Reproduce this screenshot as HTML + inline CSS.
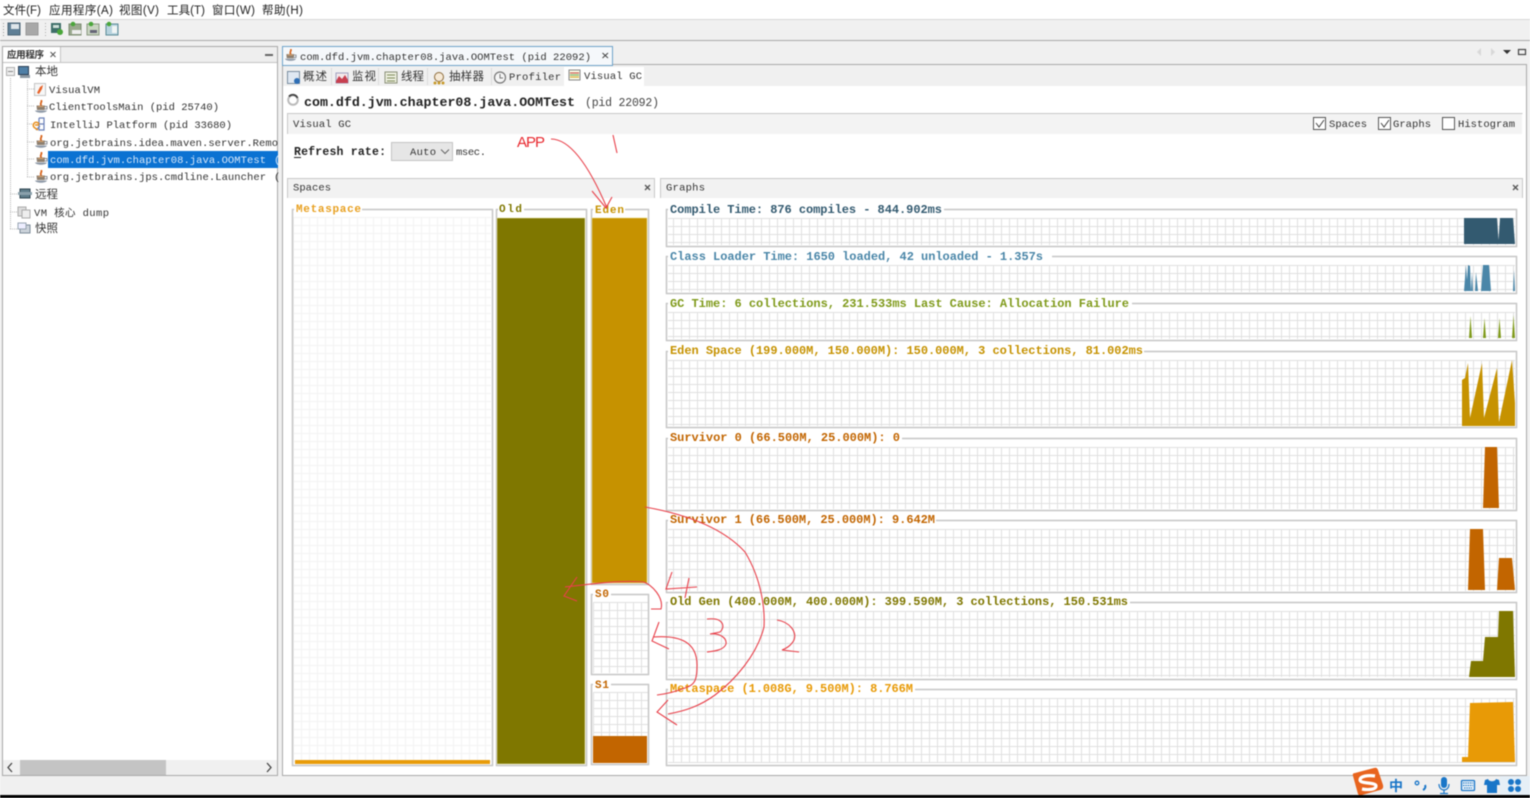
<!DOCTYPE html>
<html><head><meta charset="utf-8"><title>VisualVM</title>
<style>
html,body{margin:0;padding:0;background:#fff;width:1530px;height:798px;overflow:hidden}
svg{display:block}
#root{filter:blur(.4px)}
text{font-family:"Liberation Mono","Noto Sans CJK SC",monospace;white-space:pre}
.m{font-family:"Liberation Sans","Noto Sans CJK SC",sans-serif;font-size:11.5px;fill:#222}
.t{font-size:10.5px;fill:#333}
.c{font-family:"Noto Sans CJK SC","Liberation Sans",sans-serif;font-size:11.5px;fill:#333}
.b{font-size:12px;font-weight:bold}
.box{fill:none;stroke:#c6c6c6;stroke-width:1.5}
.r{fill:none;stroke:#e8404a;stroke-width:1.1}
</style></head><body>
<svg id="root" width="1530" height="798" viewBox="0 0 1530 798" xmlns="http://www.w3.org/2000/svg">
<defs>
<pattern id="g" width="8" height="8" patternUnits="userSpaceOnUse"><path d="M.5 0V8M0 .5H8" stroke="#e0e0e0" fill="none"/></pattern>
<pattern id="g2" width="8" height="8" patternUnits="userSpaceOnUse"><path d="M.5 0V8M0 .5H8" stroke="#f3f3f3" fill="none"/></pattern>
<symbol id="java" viewBox="0 0 14 14"><path d="M7 0C9 2 5 3 7.500 6" stroke="#d8641c" fill="none" stroke-width="1.800"/><path d="M2.500 5.500H11L10.500 10H3Z" fill="#8d7f70"/><path d="M4 6.500L9.500 6.500" stroke="#d9a066"/><path d="M1 10.500H13C12 13.500 2 13.500 1 10.500Z" fill="#8f9aa8"/><path d="M11 6.500H13V9H10.500" fill="none" stroke="#8a8f98"/></symbol>
</defs>

<!-- menu -->
<rect width="1530" height="20" fill="#fff"/>
<rect y="19" width="1530" height="1" fill="#d8d8d8"/>
<text class="m" x="3" y="14" textLength="38">文件(F)</text>
<text class="m" x="49" y="14" textLength="64">应用程序(A)</text>
<text class="m" x="119" y="14" textLength="40">视图(V)</text>
<text class="m" x="167" y="14" textLength="38">工具(T)</text>
<text class="m" x="212" y="14" textLength="43">窗口(W)</text>
<text class="m" x="262" y="14" textLength="41">帮助(H)</text>

<!-- toolbar -->
<rect y="20" width="1530" height="778" fill="#f0f0f0"/>
<rect y="40" width="1530" height="1" fill="#a9a9a9"/>
<path d="M3.500 23V36" stroke="#999" stroke-dasharray="1 2"/>
<rect x="8" y="23" width="12" height="12" fill="#5f7f96" stroke="#4c6475"/><rect x="11" y="24" width="8" height="5" fill="#dfe6ea"/>
<rect x="26" y="23" width="12" height="12" fill="#a8a8a8" stroke="#989898"/>
<path d="M45.500 23V36" stroke="#aaa" stroke-dasharray="1 2"/>
<rect x="51" y="23" width="10" height="10" fill="#3f6f6a"/><rect x="53" y="25" width="6" height="3" fill="#cfe0d8"/><circle cx="60" cy="32" r="3" fill="#4aa63a"/>
<rect x="69" y="24" width="12" height="11" fill="#9aa98e" stroke="#7c8c72"/><rect x="72" y="30" width="9" height="4" fill="#eee"/><circle cx="73" cy="24" r="2.300" fill="#4aa63a"/>
<rect x="87" y="24" width="12" height="11" fill="#c8d4c0" stroke="#8b9a82"/><rect x="90" y="30" width="7" height="3" fill="#667"/><circle cx="91" cy="24" r="2.300" fill="#4aa63a"/>
<rect x="106" y="24" width="12" height="11" fill="#b7d3de" stroke="#5b8a96"/><rect x="112" y="26" width="5" height="7" fill="#f0f5f5"/><circle cx="109" cy="24" r="2.300" fill="#4aa63a"/>

<!-- left panel -->
<rect x="2.500" y="46.500" width="275" height="729" fill="#fff" stroke="#a9a9a9"/>
<rect x="3" y="47" width="274" height="15" fill="#eeeeee"/>
<rect x="3" y="47" width="57" height="15" fill="#fff"/>
<path d="M60.500 47V62M3 62.500H277" stroke="#c4c4c4" fill="none"/>
<text x="7" y="58" style="font-family:'Noto Sans CJK SC',sans-serif;font-size:9.500px;font-weight:bold;fill:#333" textLength="37">应用程序</text>
<path d="M50.500 52L55.500 57M55.500 52L50.500 57" stroke="#555" fill="none"/>
<rect x="265" y="54" width="8" height="2" fill="#666"/>

<path d="M10.500 78V229M10 194H17M10 212H17M10 229H17M27.500 80V177M27 89H34M27 106H34M27 124H34M27 142H34M27 159H34M27 177H34" stroke="#b5b5b5" stroke-dasharray="1 1" fill="none"/>
<rect x="6.500" y="67.500" width="8" height="8" fill="#eee" stroke="#b0b0b0"/><path d="M8 71.500H13" stroke="#888"/>
<rect x="18.500" y="66.500" width="10" height="8" fill="#4f7fa6" stroke="#2b3f55"/><rect x="20" y="75" width="10" height="3" fill="#8d98a2"/>
<text class="c" x="35" y="75" textLength="23">本地</text>
<rect x="34.500" y="83.500" width="11" height="12" fill="#f7f7f7" stroke="#c4c4c4"/><path d="M37 93L40 87L43 85L42 89L39 94Z" fill="#e8632a"/>
<text class="t" x="49" y="93" textLength="51">VisualVM</text>
<use href="#java" x="34" y="100" width="14" height="14"/>
<text class="t" x="49" y="110" textLength="170">ClientToolsMain (pid 25740)</text>
<path d="M36 130L40 126M39 118H44V130H39V118M39 124H44" fill="none" stroke="#6a80b8" stroke-width="1.200"/>
<path d="M35 125H39M39 124A3 3 0 1 0 35 128L38 130" fill="none" stroke="#e89020" stroke-width="1.500"/>
<text class="t" x="50" y="128" textLength="182">IntelliJ Platform (pid 33680)</text>
<use href="#java" x="34" y="135" width="14" height="14"/>
<text class="t" x="50" y="146" textLength="228">org.jetbrains.idea.maven.server.Remo</text>
<rect x="48" y="151" width="230" height="17" fill="#0b72d2"/>
<use href="#java" x="34" y="152" width="14" height="14"/>
<text class="t" x="50" y="163" textLength="216" style="fill:#d8e8fa">com.dfd.jvm.chapter08.java.OOMTest</text>
<text class="t" x="274" y="163" style="fill:#d8e8fa">(</text>
<use href="#java" x="34" y="170" width="14" height="14"/>
<text class="t" x="50" y="180" textLength="216">org.jetbrains.jps.cmdline.Launcher</text>
<text class="t" x="274" y="180">(</text>
<rect x="20" y="189" width="10" height="9" fill="#5f7d8a" stroke="#2e4450"/><rect x="18" y="192" width="14" height="3" fill="#8aa0ab"/>
<text class="c" x="35" y="198" textLength="23">远程</text>
<rect x="18" y="207" width="8" height="9" fill="#ddd" stroke="#aaa"/><rect x="22" y="210" width="8" height="8" fill="#eee" stroke="#aaa"/>
<text class="t" x="34" y="216" textLength="75">VM 核心 dump</text>
<rect x="20" y="225" width="10" height="8" fill="#ccd3da" stroke="#7c8b99"/><rect x="18" y="223" width="8" height="6" fill="#eef" stroke="#98a5b2"/>
<text class="c" x="35" y="232" textLength="23">快照</text>

<!-- left scrollbar -->
<rect x="3" y="760" width="274" height="15" fill="#f0f0f0"/>
<rect x="20" y="760" width="146" height="15" fill="#c4c4c4"/>
<path d="M12 763L8 767.500L12 772M267 763L271 767.500L267 772" fill="none" stroke="#444" stroke-width="1.300"/>

<!-- right panel -->
<rect x="282.500" y="64.500" width="1244" height="711" fill="#fff" stroke="#a9a9a9"/>
<rect x="283" y="65" width="1243" height="21" fill="#f0f0f0"/>
<rect x="282.500" y="46.500" width="330" height="19" fill="#f5f8fb" stroke="#6ea3c9"/>
<use href="#java" x="284" y="49" width="13" height="13"/>
<text class="t" x="300" y="60" textLength="291">com.dfd.jvm.chapter08.java.OOMTest (pid 22092)</text>
<path d="M602.500 53L608 58M608 53L602.500 58" stroke="#444" fill="none"/>
<path d="M1481 48L1477 52L1481 56Z" fill="#d8d8d8"/><path d="M1491 48L1495 52L1491 56Z" fill="#d8d8d8"/>
<path d="M1503 50H1511L1507 54Z" fill="#333"/>
<rect x="1518.500" y="49.500" width="7" height="5" fill="none" stroke="#444" stroke-width="1.200"/>

<!-- subtabs -->
<path d="M331.500 68V85M378.500 68V85M427.500 68V85M491.500 68V85" stroke="#dcdcdc"/>
<rect x="287.500" y="71.500" width="12" height="12" fill="#dfe8f2" stroke="#7a8ea0"/><circle cx="297" cy="81" r="3" fill="#2f6fb5"/>
<text class="c" x="303" y="80" textLength="24">概述</text>
<rect x="336" y="73" width="12" height="10" fill="#f3e8ea" stroke="#a0a0c0"/><path d="M336 81L339 76L342 79L345 75L348 80V83H336Z" fill="#c84050"/>
<text class="c" x="352" y="80" textLength="24">监视</text>
<rect x="385" y="72" width="12" height="11" fill="#eef0e0" stroke="#8a8f78"/><path d="M387 75H395M387 78H395M387 81H395" stroke="#7c8a5a"/>
<text class="c" x="401" y="80" textLength="23">线程</text>
<circle cx="439" cy="77" r="4.500" fill="#f6e9d6" stroke="#8d6b3a"/><circle cx="435" cy="83" r="1.500" fill="#c89a2a"/><circle cx="439" cy="83" r="1.500" fill="#c89a2a"/><circle cx="443" cy="83" r="1.500" fill="#c89a2a"/>
<text class="c" x="449" y="80" textLength="35">抽样器</text>
<circle cx="500" cy="77.500" r="5.500" fill="#f5f5f5" stroke="#777" stroke-width="1.200"/><path d="M500 74V78H503" stroke="#777" fill="none"/>
<text class="t" x="509" y="80" textLength="52">Profiler</text>
<rect x="564" y="67" width="80" height="19" fill="#fff"/>
<rect x="569" y="70" width="11" height="10" fill="#f8f8e4" stroke="#888"/><path d="M570 73H579" stroke="#c8453a"/><path d="M570 75H579" stroke="#6aa84f"/><path d="M570 77H579" stroke="#d8a020"/>
<text class="t" x="584" y="79" textLength="58">Visual GC</text>

<!-- title -->
<circle cx="293" cy="100" r="4.800" fill="none" stroke="#bbb" stroke-width="2"/>
<path d="M289 96.500A5 5 0 0 1 297.500 98" fill="none" stroke="#444" stroke-width="1.800"/>
<text x="304" y="106" textLength="271" style="font-size:13.300px;font-weight:bold;fill:#222">com.dfd.jvm.chapter08.java.OOMTest</text>
<text x="585" y="106" textLength="74" style="font-size:11.500px;fill:#444">(pid 22092)</text>

<!-- visual gc bar -->
<rect x="287" y="113" width="1235" height="21" fill="#f3f3f3"/>
<path d="M287.500 134V113.500H1522.500" stroke="#c8c8c8" fill="none"/>
<text class="t" x="293" y="127" textLength="58">Visual GC</text>
<rect x="1313.500" y="117.500" width="12" height="12" fill="#fff" stroke="#555"/><path d="M1316 123L1319 127L1324 120" fill="none" stroke="#444"/>
<text class="t" x="1329" y="127" textLength="38">Spaces</text>
<rect x="1378.500" y="117.500" width="12" height="12" fill="#fff" stroke="#555"/><path d="M1381 123L1384 127L1389 120" fill="none" stroke="#444"/>
<text class="t" x="1393" y="127" textLength="38">Graphs</text>
<rect x="1442.500" y="117.500" width="12" height="12" fill="#fff" stroke="#555"/>
<text class="t" x="1458" y="127" textLength="57">Histogram</text>

<!-- refresh -->
<text x="294" y="155" textLength="92" style="font-size:11.500px;font-weight:bold;fill:#222">Refresh rate:</text>
<path d="M294 157.500H301" stroke="#222"/>
<rect x="391.500" y="142.500" width="61" height="18" fill="#e6e6e6" stroke="#c4c4c4"/>
<text class="t" x="410" y="155" textLength="26">Auto</text>
<path d="M441 149.500L445 153.500L449 149.500" fill="none" stroke="#666"/>
<text class="t" x="456" y="155" textLength="30">msec.</text>

<!-- section headers -->
<rect x="287" y="178" width="368" height="20" fill="#f2f2f2"/>
<path d="M287.500 198V178.500H654.500V198" stroke="#c8c8c8" fill="none"/>
<text class="t" x="293" y="190.500" textLength="38">Spaces</text>
<path d="M645 185L650 190M650 185L645 190" stroke="#555" stroke-width="1.300" fill="none"/>
<rect x="660" y="178" width="862" height="20" fill="#f2f2f2"/>
<path d="M660.500 198V178.500H1522.500V198" stroke="#c8c8c8" fill="none"/>
<text class="t" x="666" y="190.500" textLength="39">Graphs</text>
<path d="M1513 185L1518 190M1518 185L1513 190" stroke="#555" stroke-width="1.300" fill="none"/>

<!-- spaces -->
<svg x="293" y="217" width="198" height="547"><rect width="198" height="547" fill="url(#g2)"/></svg>
<rect class="box" x="292.500" y="209.500" width="200" height="556"/>
<rect x="295" y="760" width="195" height="4" fill="#e89c0a"/>
<rect x="294" y="204" width="68" height="10" fill="#fff"/>
<text class="b" x="296" y="212" textLength="65" style="fill:#e8a020;font-size:11px">Metaspace</text>

<rect class="box" x="496.500" y="209.500" width="90" height="556"/>
<rect x="497" y="218" width="88" height="546" fill="#7f7700" stroke="#e8e4a8" stroke-width=".5"/>
<rect x="498" y="204" width="26" height="10" fill="#fff"/>
<text class="b" x="499" y="212" textLength="23" style="fill:#7f7700;font-size:11px">Old</text>

<rect class="box" x="591.500" y="209.500" width="57" height="375"/>
<rect x="592" y="218" width="55" height="365" fill="#c69200" stroke="#eadb7c" stroke-width=".5"/>
<rect x="593" y="204" width="32" height="10" fill="#fff"/>
<text class="b" x="595" y="213" textLength="29" style="fill:#c69200;font-size:11px">Eden</text>

<svg x="593" y="602" width="55" height="71"><rect width="55" height="71" fill="url(#g)"/></svg>
<rect class="box" x="591.500" y="594.500" width="57" height="80"/>
<rect x="593" y="589" width="18" height="10" fill="#fff"/>
<text class="b" x="595" y="597" textLength="14" style="fill:#c26500;font-size:11px">S0</text>

<svg x="593" y="692" width="55" height="45"><rect width="55" height="45" fill="url(#g)"/></svg>
<rect class="box" x="591.500" y="684.500" width="57" height="80"/>
<rect x="593" y="736" width="54" height="27" fill="#c26500"/>
<rect x="593" y="679" width="18" height="10" fill="#fff"/>
<text class="b" x="595" y="688" textLength="14" style="fill:#c26500;font-size:11px">S1</text>

<!-- graph grids -->
<svg x="665" y="218" width="850" height="27"><rect x="3" width="850" height="27" fill="url(#g)"/></svg>
<svg x="665" y="265" width="850" height="27"><rect x="3" width="850" height="27" fill="url(#g)"/></svg>
<svg x="665" y="312" width="850" height="27"><rect x="3" width="850" height="27" fill="url(#g)"/></svg>
<svg x="665" y="360" width="850" height="66"><rect x="3" width="850" height="66" fill="url(#g)"/></svg>
<svg x="665" y="447" width="850" height="62"><rect x="3" width="850" height="62" fill="url(#g)"/></svg>
<svg x="665" y="529" width="850" height="62"><rect x="3" width="850" height="62" fill="url(#g)"/></svg>
<svg x="665" y="611" width="850" height="66"><rect x="3" width="850" height="66" fill="url(#g)"/></svg>
<svg x="665" y="698" width="850" height="65"><rect x="3" width="850" height="65" fill="url(#g)"/></svg>

<rect class="box" x="666.500" y="209.500" width="850" height="37"/>
<rect class="box" x="666.500" y="256.500" width="850" height="37"/>
<rect class="box" x="666.500" y="303.500" width="850" height="37"/>
<rect class="box" x="666.500" y="351.500" width="850" height="76"/>
<rect class="box" x="666.500" y="438.500" width="850" height="72"/>
<rect class="box" x="666.500" y="520.500" width="850" height="72"/>
<rect class="box" x="666.500" y="602.500" width="850" height="77"/>
<rect class="box" x="666.500" y="689.500" width="850" height="76"/>

<!-- graph fills -->
<path d="M1464 244V218H1497L1498.500 240L1500 218H1513L1515 244Z" fill="#335a70"/>
<path d="M1464 291L1466 265L1467 280L1468 265L1470 266L1471 291ZM1471 291L1472 272L1473 291ZM1475 291L1476 272L1478 291ZM1481 291L1483 265H1489L1491 291ZM1513 291L1514 270L1515 291Z" fill="#4a86a8"/>
<path d="M1469 338L1470.500 316L1472 338ZM1483 338L1484.500 318L1486 338ZM1498 338L1499.500 318L1501 338ZM1512 338L1513.500 315L1515 338Z" fill="#7f9a1a"/>
<path d="M1462 426V380L1465 378L1468 363L1470 418L1482 363L1484 418L1497 368L1499 422L1512 360L1515 403V426Z" fill="#c69200"/>
<path d="M1483 508L1485 447H1497L1499 508Z" fill="#c26500"/>
<path d="M1468 590L1470 529H1483L1485 590ZM1497 590L1499 558H1512L1515 590Z" fill="#c26500"/>
<path d="M1469 677L1471 661H1483L1485 637H1498L1499 611H1513L1515 677Z" fill="#7f7700"/>
<path d="M1462 762V757H1468L1470 703L1513 702L1515 762Z" fill="#e89a06"/>

<!-- graph titles -->
<rect x="668" y="204" width="276" height="10" fill="#fff"/>
<text class="b" x="670" y="213" textLength="272" style="fill:#335a70">Compile Time: 876 compiles - 844.902ms</text>
<rect x="668" y="251" width="384" height="10" fill="#fff"/>
<text class="b" x="670" y="260" textLength="373" style="fill:#4a86a8">Class Loader Time: 1650 loaded, 42 unloaded - 1.357s</text>
<rect x="668" y="298" width="464" height="10" fill="#fff"/>
<text class="b" x="670" y="307" textLength="459" style="fill:#7f9a1a">GC Time: 6 collections, 231.533ms Last Cause: Allocation Failure</text>
<rect x="668" y="346" width="476" height="10" fill="#fff"/>
<text class="b" x="670" y="354" textLength="473" style="fill:#c69200">Eden Space (199.000M, 150.000M): 150.000M, 3 collections, 81.002ms</text>
<rect x="668" y="433" width="234" height="10" fill="#fff"/>
<text class="b" x="670" y="441" textLength="230" style="fill:#c26500">Survivor 0 (66.500M, 25.000M): 0</text>
<rect x="668" y="515" width="268" height="10" fill="#fff"/>
<text class="b" x="670" y="523" textLength="265" style="fill:#c26500">Survivor 1 (66.500M, 25.000M): 9.642M</text>
<rect x="668" y="597" width="462" height="10" fill="#fff"/>
<text class="b" x="670" y="605" textLength="458" style="fill:#7f7700">Old Gen (400.000M, 400.000M): 399.590M, 3 collections, 150.531ms</text>
<rect x="668" y="684" width="247" height="10" fill="#fff"/>
<text class="b" x="670" y="692" textLength="243" style="fill:#e89a06">Metaspace (1.008G, 9.500M): 8.766M</text>

<!-- red annotations -->
<text x="517" y="147" textLength="28" style="font-family:'Liberation Sans',sans-serif;font-size:15px;fill:#e8282e">APP</text>
<path class="r" d="M551 139C573 139 593 175 607 208M592 191L606 208L612 197M613 135L617 153"/>
<path class="r" d="M645 507C690 515 725 530 745 552C762 580 765 610 764 627C757 655 735 680 715 695C700 706 685 711 668 714M668 700L657 712L677 725"/>
<path class="r" d="M651 609H661C664 598 652 584 643 582C620 580 590 584 565 587M577 577L564 596L577 601"/>
<path class="r" d="M659 622L652 641L669 649M653 637C680 635 697 642 697 665C697 680 695 685 685 688C675 692 665 694 657 695"/>
<path class="r" d="M672 572L666 589L697 587M689 578L685 598"/>
<path class="r" d="M707 619C725 617 725 628 720 632L710 634C720 633 727 638 726 644C724 650 715 651 707 652"/>
<path class="r" d="M777 620C790 622 797 632 794 640C791 646 785 649 782 650L799 652"/>

<!-- status / tray -->
<rect x="1500" y="776" width="30" height="19" fill="#e6eff6"/>
<path d="M1355 773Q1352 773 1353 776L1358 794Q1359 796 1362 795L1380 790Q1384 789 1383 785L1378 770Q1377 767 1374 768Z" fill="#e8641e"/>
<path d="M1375 776C1368 775 1360 776 1360 780C1360 784 1376 782 1376 786C1376 790 1367 790 1362 789" fill="none" stroke="#fff" stroke-width="3.200"/>
<text x="1389" y="791" style="font-family:'Noto Sans CJK SC',sans-serif;font-size:14px;font-weight:bold;fill:#1a76c8">中</text>
<circle cx="1417" cy="783" r="1.800" fill="none" stroke="#1a76c8" stroke-width="1.300"/>
<path d="M1425 785C1426 787 1425 789 1423 790" stroke="#1a76c8" stroke-width="2" fill="none"/>
<rect x="1441" y="777" width="6" height="11" rx="3" fill="#1a76c8"/>
<path d="M1439 784C1439 792 1449 792 1449 784M1444 790V793M1440 793.500H1448" stroke="#1a76c8" fill="none" stroke-width="1.200"/>
<rect x="1461.500" y="780.500" width="13" height="10" rx="1" fill="#e8f1f8" stroke="#1a76c8" stroke-width="1.300"/>
<path d="M1463 783H1473M1463 785.500H1473M1464 788H1472" stroke="#1a76c8" stroke-width="1" stroke-dasharray="1.500 .8"/>
<path d="M1488 779L1485 780L1484 785H1487V793H1497V785H1500L1499 780L1496 779C1495 782 1489 782 1488 779Z" fill="#1a76c8"/>
<circle cx="1511" cy="782" r="3" fill="#1a76c8"/><circle cx="1518" cy="782" r="3" fill="#1a76c8"/><circle cx="1511" cy="789" r="3" fill="#1a76c8"/><circle cx="1518" cy="789" r="3" fill="#1a76c8"/>
<rect x="0" y="795" width="1530" height="3" fill="#000"/>
</svg>
</body></html>
